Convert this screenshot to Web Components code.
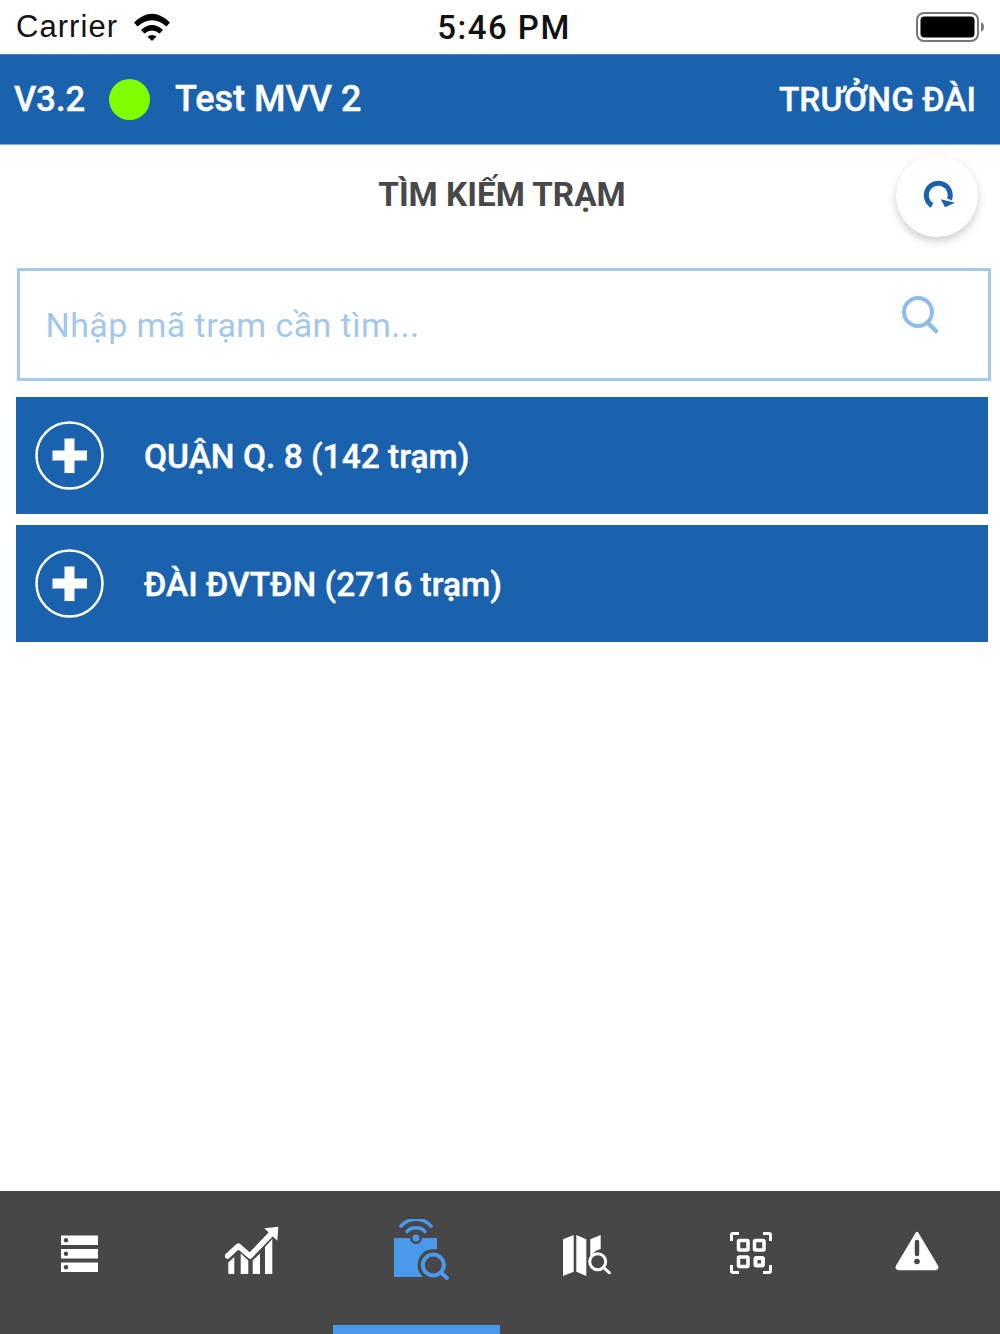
<!DOCTYPE html>
<html lang="vi"><head><meta charset="utf-8">
<style>
html,body{margin:0;padding:0;background:#fff}
body{width:1000px;height:1334px;font-family:Roboto,"Liberation Sans",sans-serif}
app-shell{height:1334px}
</style></head><body>
<app-shell>
  <status-bar></status-bar>
  <app-header version="V3.2" name="Test MVV 2" role="TRƯỞNG ĐÀI"></app-header>
  <title-row>TÌM KIẾM TRẠM</title-row>
  <search-box placeholder="Nhập mã trạm cần tìm..."></search-box>
  <group-list>
    <group-row>QUẬN Q. 8 (142 trạm)</group-row>
    <group-row>ĐÀI ĐVTĐN (2716 trạm)</group-row>
  </group-list>
  <tab-bar></tab-bar>
</app-shell>
<script>
function def(name, html){
  customElements.define(name, class extends HTMLElement{
    constructor(){super();this.attachShadow({mode:'open'}).innerHTML=typeof html==='function'?html(this):html;}
  });
}
def('app-shell',`<style>:host{display:flex;flex-direction:column;width:1000px;overflow:hidden}</style><slot></slot>`);

def('status-bar',`<style>
:host{display:flex;align-items:center;height:54px;padding:0 13px 0 16px;box-sizing:border-box;position:relative;color:#111}
.l{display:flex;align-items:center;gap:15px;flex:1}
.carrier{font:400 31px/56px "Liberation Sans",Roboto,sans-serif;letter-spacing:1.05px}
.t{position:absolute;left:0;right:0;top:0;height:54px;text-align:center;font:500 33px/55px Roboto,sans-serif;letter-spacing:1.5px;padding-left:8px;box-sizing:border-box}
svg{display:block}
</style>
<div class="l"><span class="carrier">Carrier</span>
<svg width="38" height="28" viewBox="0 0 38 28" fill="#000"><path d="M1 9.500Q19 -8 37 9.500L33.500 13.500Q19 1 4.500 13.500Z"/><path d="M8 17Q19 7 30 17L26.500 20.500Q19 14.500 11.500 20.500Z"/><path d="M14.500 23.500Q19 20.500 23.500 23.500L19 28Z"/></svg></div>
<div class="t">5:46 PM</div>
<svg width="71" height="32" viewBox="0 0 71 32"><rect x="1" y="2" width="61" height="28" rx="7" fill="#fff" stroke="#777" stroke-width="2"/><rect x="4.500" y="5.500" width="54" height="21" rx="4" fill="#000"/><path d="M65 11.500C67 12 68 13.500 68 16S67 20 65 20.500Z" fill="#777"/></svg>`);

def('app-header',el=>`<style>
:host{display:flex;align-items:center;height:90px;background:#1a62ae;color:#fff;padding:0 24px 0 14px;box-sizing:border-box;font:500 35px Roboto,sans-serif;flex:none;box-shadow:0 1px 0 #7fb0e0, inset 0 1px 0 #4a86c5;-webkit-text-stroke:.4px #fff}
.v{margin-right:24px;font-size:34.500px}
.d{width:41px;height:41px;border-radius:50%;background:#80ff00;margin-right:25px}
.n{flex:1;font-size:36px}
.r{font-size:33.500px}
</style><span class="v">${el.getAttribute('version')}</span><span class="d"></span><span class="n">${el.getAttribute('name')}</span><span class="r">${el.getAttribute('role')}</span>`);

def('title-row',`<style>
:host{display:flex;align-items:center;justify-content:center;height:124px;flex:none;position:relative;box-sizing:border-box;padding:0 0 24px 4px;color:#484848;font:700 33.300px Roboto,sans-serif}
.b{position:absolute;left:896px;top:11px;width:82px;height:82px;border-radius:50%;background:#fff;box-shadow:0 4px 9px rgba(0,0,0,.2);display:flex;align-items:center;justify-content:center}
svg{display:block;overflow:visible}
</style><slot></slot>
<div class="b"><svg width="34" height="34" viewBox="0 0 34 34"><path d="M12 26.500A12 12 0 1 1 29.500 20.500" fill="none" stroke="#1a62ae" stroke-width="5"/><path d="M20.700 20.300L35 23.700L25 28.300Z" fill="#1a62ae"/></svg></div>`);

def('search-box',el=>`<style>
:host{display:flex;align-items:center;height:113px;margin:0 9px 0 16.500px;border:3px solid #a5c9ed;box-sizing:border-box;padding:0 49px 0 26px;flex:none;color:#a3c7ea;font:400 34px Roboto,sans-serif}
span{flex:1;letter-spacing:.42px}
svg{display:block;margin-top:-20px}
</style><span>${el.getAttribute('placeholder')}</span>
<svg width="38" height="38" viewBox="0 0 38 38"><circle cx="17" cy="16" r="14" fill="none" stroke="#8ebce9" stroke-width="4"/><path d="M26.500 26.500L35 35" stroke="#8ebce9" stroke-width="4.500" stroke-linecap="round"/></svg>`);

def('group-list',`<style>:host{display:flex;flex-direction:column;gap:11px;margin:16px 12px 0 16px;flex:1}</style><slot></slot>`);

def('group-row',`<style>
:host{display:flex;align-items:center;height:117px;background:#1a62ae;color:#fff;padding-left:19px;box-sizing:border-box;font:500 33.500px Roboto,sans-serif;gap:40px;-webkit-text-stroke:.4px #fff}
svg{display:block;flex:none}
span{padding-top:2px}
</style>
<svg width="69" height="69" viewBox="0 0 69 69"><circle cx="34.500" cy="34.500" r="33" fill="none" stroke="#fff" stroke-width="2.500"/><path d="M29.500 17.500H39.500V29.500H52V39.500H39.500V52H29.500V39.500H17.500V29.500H29.500Z" fill="#fff"/></svg><span><slot></slot></span>`);

const icons=[
`<svg width="38" height="38" viewBox="0 0 38 38"><g fill="#fff"><rect y="0.500" width="37" height="9.500"/><rect y="14" width="37" height="9.500"/><rect y="27.500" width="37" height="9.500"/></g><g fill="#474747"><circle cx="5" cy="5.200" r="2.200"/><circle cx="5" cy="18.700" r="2.200"/><circle cx="5" cy="32.200" r="2.200"/></g></svg>`,
`<svg width="56" height="50" viewBox="0 0 56 50"><g fill="#fff"><path d="M3.300 48V36.500L9.300 31V48Z"/><path d="M15.700 48V27.500L23.300 34.500V48Z"/><path d="M27.700 48V34.500L35 27.500V48Z"/><path d="M40 48V21L47.300 13V48Z"/></g><path d="M2.500 30L13.300 20L25 30L48 6" fill="none" stroke="#fff" stroke-width="5.500" stroke-linecap="round" stroke-linejoin="round"/><path d="M39.300 2.300L53.300 0.700L52.300 14.700Z" fill="#fff"/></svg>`,
`<svg width="56" height="62" viewBox="0 0 56 62"><g fill="#4a99ec"><path d="M1 19H17A6 6 0 0 0 29 19H44V30.400A16 16 0 0 0 30 58H1Z"/><circle cx="23" cy="19" r="3.500"/></g><g fill="none" stroke="#4a99ec" stroke-linecap="round"><path d="M14 12.500A12.500 12.500 0 0 1 32 12.500" stroke-width="3.500"/><path d="M8 7A20 20 0 0 1 38 7" stroke-width="3.500"/></g><circle cx="40.300" cy="46" r="10.500" fill="none" stroke="#4a99ec" stroke-width="4"/><path d="M48.500 54L54 59" stroke="#4a99ec" stroke-width="4" stroke-linecap="round"/></svg>`,
`<svg width="48" height="42" viewBox="0 0 48 42"><g fill="#fff"><path d="M0 4.300L10.700 0V36.700L0 41Z"/><path d="M13.300 0L23.300 4.300V41L13.300 36.700Z"/><path d="M27.300 4.300L37.700 0V14A14 14 0 0 0 27.300 24Z"/></g><circle cx="34.700" cy="26.700" r="8" fill="none" stroke="#fff" stroke-width="3"/><path d="M40.500 32.500L46.300 37.700" stroke="#fff" stroke-width="3" stroke-linecap="round"/></svg>`,
`<svg width="42" height="42" viewBox="0 0 42 42"><g fill="none" stroke="#fff" stroke-width="3"><path d="M1.500 9V3Q1.500 1.500 3 1.500H9"/><path d="M33 1.500H39Q40.500 1.500 40.500 3V9"/><path d="M1.500 33V39Q1.500 40.500 3 40.500H9"/><path d="M33 40.500H39Q40.500 40.500 40.500 39V33"/></g><g fill="none" stroke="#fff" stroke-width="3.500"><rect x="8.500" y="8.500" width="9.500" height="9.500" rx="1"/><rect x="24.500" y="8.500" width="9.500" height="9.500" rx="1"/><rect x="8.500" y="25" width="9.500" height="9.500" rx="1"/><rect x="25.500" y="26" width="7.500" height="7.500" rx="1" stroke-width="4"/></g></svg>`,
`<svg width="44" height="40" viewBox="0 0 44 40"><path d="M22 2L42 35.500Q43 37.500 40 38H4Q1 37.500 2 35.500Z" fill="#fff" stroke="#fff" stroke-width="2.500" stroke-linejoin="round"/><path d="M22 11V23" stroke="#474747" stroke-width="4.500" stroke-linecap="round"/><circle cx="22" cy="30.500" r="2.800" fill="#474747"/></svg>`
];
const shifts=[-3,3,4,3.700,1,0], tops=[44,35,28,44,41,40];
def('tab-bar',`<style>
:host{display:grid;grid-template-columns:repeat(6,1fr);height:143px;background:#474747;flex:none}
.t{position:relative;display:flex;justify-content:center;align-items:flex-start}
.t.on::after{content:"";position:absolute;left:0;right:0;bottom:0;height:9px;background:#4a99ec}
svg{display:block}
</style>`+icons.map((s,i)=>`<div class="t${i==2?' on':''}"><div style="margin-left:${shifts[i]*2}px;margin-top:${tops[i]}px">${s}</div></div>`).join(''));
</script>
</body></html>
